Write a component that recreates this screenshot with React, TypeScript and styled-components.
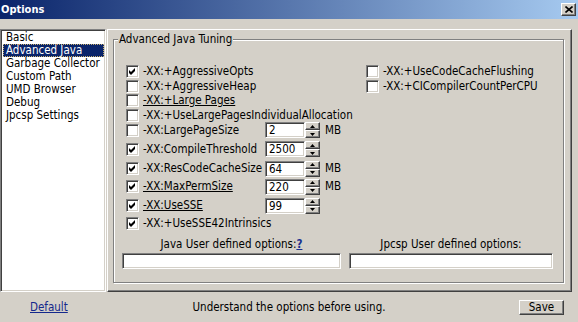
import React from "react";
import styled, { createGlobalStyle, css } from "styled-components";

const GlobalStyle = createGlobalStyle`
  html, body {
    margin: 0;
    padding: 0;
    background: #d4d0c8;
  }
  body {
    font-family: "DejaVu Sans Condensed", "Liberation Sans", Arial, sans-serif;
    font-size: 11.5px;
    color: #000;
  }
  * {
    box-sizing: border-box;
  }
`;

const sunken = css`
  border: 1px solid;
  border-color: #808080 #ffffff #ffffff #808080;
  box-shadow: inset 1px 1px 0 #404040, inset -1px -1px 0 #d4d0c8;
`;

const raised = css`
  border: 1px solid;
  border-color: #ffffff #404040 #404040 #ffffff;
  box-shadow: inset -1px -1px 0 #808080;
`;

const Window = styled.div`
  width: 578px;
  height: 322px;
  display: flex;
  flex-direction: column;
  background: #d4d0c8;
  overflow: hidden;
`;

const TitleBar = styled.div`
  height: 19px;
  flex-shrink: 0;
  display: flex;
  align-items: center;
  justify-content: space-between;
  padding: 0 2px 0 1px;
  background: linear-gradient(to right, #0a246a, #a6caf0);
  color: #fff;
  font-weight: bold;
  font-size: 11px;
`;

const CloseButton = styled.div`
  ${raised};
  width: 15px;
  height: 13px;
  background: #d4d0c8;
  display: flex;
  align-items: center;
  justify-content: center;
`;

const Body = styled.div`
  display: flex;
  gap: 1px;
  padding: 10px 6px 0 0;
  height: 273px;
`;

const NavList = styled.ul`
  ${sunken};
  width: 106px;
  height: 263px;
  margin: 0;
  padding: 1px 0;
  list-style: none;
  background: #fff;
`;

const NavItem = styled.li<{ $selected?: boolean }>`
  height: 13px;
  line-height: 13px;
  margin: 0 1px 0 2px;
  padding-left: 3px;
  white-space: nowrap;
  ${(p) =>
    p.$selected &&
    css`
      background: #0a246a;
      color: #fff;
      outline: 1px dotted #c8b070;
      outline-offset: -1px;
    `}
`;

const Panel = styled.div`
  ${raised};
  width: 465px;
  height: 263px;
  display: flex;
  flex-direction: column;
  padding: 3px 7px 8px 5px;
`;

const Group = styled.fieldset`
  flex: 1;
  margin: 0;
  min-width: 0;
  border: 1px solid #808080;
  box-shadow: inset 1px 1px 0 #fff, 1px 1px 0 #fff;
  padding: 18px 9px 13px 8px;
`;

const GroupTitle = styled.legend`
  margin-left: -4px;
  padding: 0 1px;
  line-height: 13px;
  height: 13px;
  background: #d4d0c8;
`;

const Options = styled.div`
  display: flex;
  margin-left: 4px;
`;

const Column = styled.div<{ $width?: number }>`
  display: flex;
  flex-direction: column;
  width: ${(p) => (p.$width ? `${p.$width}px` : "auto")};
`;

const Row = styled.div<{ $h: number }>`
  height: ${(p) => p.$h}px;
  display: flex;
  align-items: center;
`;

const Box = styled.span`
  ${sunken};
  width: 13px;
  height: 13px;
  flex-shrink: 0;
  margin-right: 4px;
  background: #fff;
  display: flex;
`;

const Label = styled.span<{ $underline?: boolean; $width?: number }>`
  white-space: nowrap;
  line-height: 13px;
  flex-shrink: 0;
  width: ${(p) => (p.$width ? `${p.$width}px` : "auto")};
  text-decoration: ${(p) => (p.$underline ? "underline" : "none")};
`;

const Spin = styled.div`
  display: flex;
  height: 16px;
`;

const SpinField = styled.div`
  ${sunken};
  width: 40px;
  height: 16px;
  background: #fff;
  padding-left: 3px;
  line-height: 14px;
`;

const SpinButtons = styled.div`
  display: flex;
  flex-direction: column;
  width: 15px;
`;

const SpinButton = styled.div`
  ${raised};
  height: 8px;
  background: #d4d0c8;
  display: flex;
  align-items: center;
  justify-content: center;
`;

const Unit = styled.span`
  margin-left: 5px;
  line-height: 13px;
`;

const UserOptions = styled.div`
  display: grid;
  grid-template-columns: 219px 204px;
  column-gap: 8px;
  row-gap: 2px;
  margin-top: 7px;
`;

const UserLabel = styled.div`
  text-align: center;
  line-height: 13px;
  height: 13px;
`;

const HelpLink = styled.span`
  font-weight: bold;
  text-decoration: underline;
  color: #1a2f8f;
`;

const TextField = styled.div`
  ${sunken};
  height: 16px;
  background: #fff;
`;

const Footer = styled.div`
  height: 30px;
  display: grid;
  grid-template-columns: 1fr auto 1fr;
  align-items: center;
`;

const FooterLink = styled.span`
  padding-left: 30px;
  color: #14288c;
  text-decoration: underline;
`;

const Message = styled.span`
  line-height: 13px;
`;

const Button = styled.div`
  ${raised};
  justify-self: end;
  margin-right: 14px;
  width: 45px;
  height: 15px;
  line-height: 13px;
  text-align: center;
  background: #d4d0c8;
`;

const Check = () => (
  <svg width="11" height="11" viewBox="0 0 11 11">
    <path d="M2 4 L4 6 L8 2 L8 5 L4 9 L2 7 Z" fill="#000" />
  </svg>
);

const Arrow = ({ up }: { up?: boolean }) => (
  <svg width="5" height="3" viewBox="0 0 5 3">
    <polygon points={up ? "2.5,0 5,3 0,3" : "0,0 5,0 2.5,3"} fill="#000" />
  </svg>
);

type Opt = {
  label: string;
  checked?: boolean;
  underline?: boolean;
  value?: string;
  unit?: string;
  h: number;
};

const leftOptions: Opt[] = [
  { label: "-XX:+AggressiveOpts", checked: true, h: 15 },
  { label: "-XX:+AggressiveHeap", h: 14 },
  { label: "-XX:+Large Pages", underline: true, h: 15 },
  { label: "-XX:+UseLargePagesIndividualAllocation", h: 14 },
  { label: "-XX:LargePageSize", value: "2", unit: "MB", h: 16 },
  { label: "-XX:CompileThreshold", checked: true, value: "2500", h: 22 },
  { label: "-XX:ResCodeCacheSize", checked: true, value: "64", unit: "MB", h: 17 },
  { label: "-XX:MaxPermSize", checked: true, underline: true, value: "220", unit: "MB", h: 19 },
  { label: "-XX:UseSSE", checked: true, underline: true, value: "99", h: 19 },
  { label: "-XX:+UseSSE42Intrinsics", checked: true, h: 16 },
];

const rightOptions: Opt[] = [
  { label: "-XX:+UseCodeCacheFlushing", h: 15 },
  { label: "-XX:+CICompilerCountPerCPU", h: 14 },
];

const sections = [
  "Basic",
  "Advanced Java",
  "Garbage Collector",
  "Custom Path",
  "UMD Browser",
  "Debug",
  "Jpcsp Settings",
];

const OptionRow = ({ opt }: { opt: Opt }) => (
  <Row $h={opt.h}>
    <Box>{opt.checked && <Check />}</Box>
    <Label $underline={opt.underline} $width={opt.value ? 122 : undefined}>
      {opt.label}
    </Label>
    {opt.value && (
      <Spin>
        <SpinField>{opt.value}</SpinField>
        <SpinButtons>
          <SpinButton>
            <Arrow up />
          </SpinButton>
          <SpinButton>
            <Arrow />
          </SpinButton>
        </SpinButtons>
      </Spin>
    )}
    {opt.unit && <Unit>{opt.unit}</Unit>}
  </Row>
);

const App: React.FC = () => {
  return (
    <>
      <GlobalStyle />
      <Window>
        <TitleBar>
          <span>Options</span>
          <CloseButton>
            <svg width="8" height="7" viewBox="0 0 8 7">
              <path d="M0.5 0.5 L7.5 6.5 M7.5 0.5 L0.5 6.5" stroke="#000" strokeWidth="1.6" />
            </svg>
          </CloseButton>
        </TitleBar>
        <Body>
          <NavList>
            {sections.map((s) => (
              <NavItem key={s} $selected={s === "Advanced Java"}>
                {s}
              </NavItem>
            ))}
          </NavList>
          <Panel>
            <Group>
              <GroupTitle>Advanced Java Tuning</GroupTitle>
              <Options>
                <Column $width={240}>
                  {leftOptions.map((o) => (
                    <OptionRow key={o.label} opt={o} />
                  ))}
                </Column>
                <Column>
                  {rightOptions.map((o) => (
                    <OptionRow key={o.label} opt={o} />
                  ))}
                </Column>
              </Options>
              <UserOptions>
                <UserLabel>
                  Java User defined options:<HelpLink>?</HelpLink>
                </UserLabel>
                <UserLabel>Jpcsp User defined options:</UserLabel>
                <TextField />
                <TextField />
              </UserOptions>
            </Group>
          </Panel>
        </Body>
        <Footer>
          <FooterLink>Default</FooterLink>
          <Message>Understand the options before using.</Message>
          <Button>Save</Button>
        </Footer>
      </Window>
    </>
  );
};

export default App;
